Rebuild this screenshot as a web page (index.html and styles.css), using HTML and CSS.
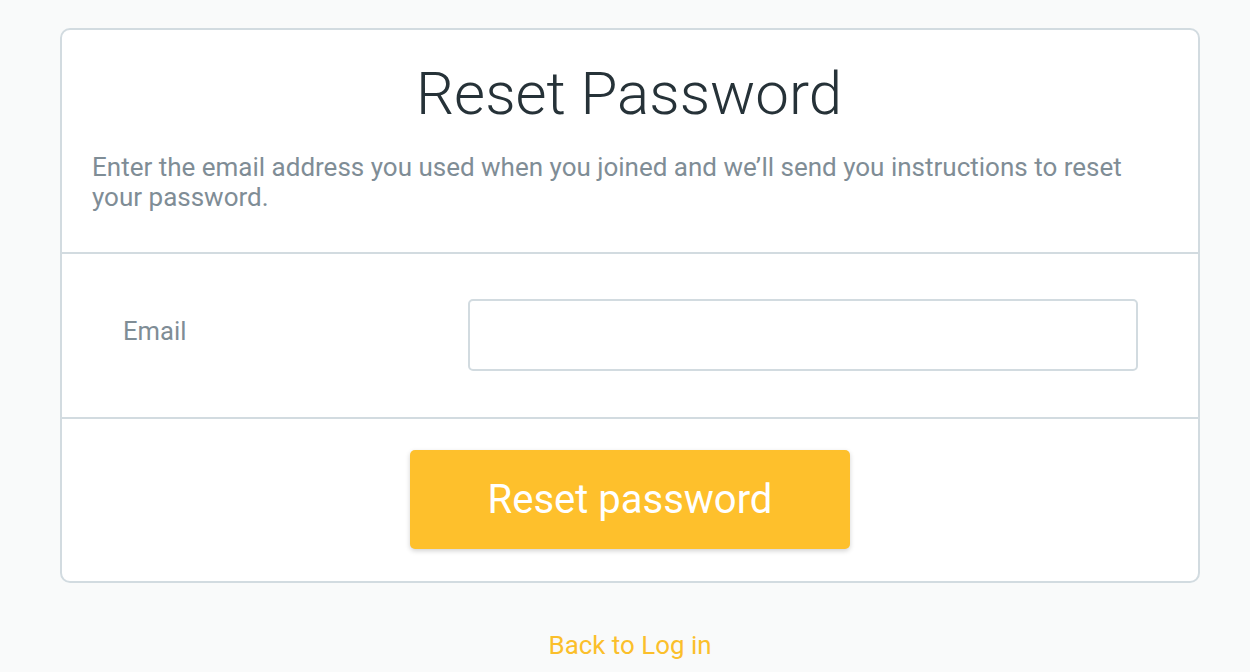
FILE: index.html
```html
<!DOCTYPE html>
<html lang="en">
<head>
<meta charset="utf-8">
<title>Reset Password</title>
<link rel="stylesheet" href="styles.css">
</head>
<body>
<main class="page">
  <section class="card">
    <header class="card-head">
      <h1 class="title">Reset Password</h1>
      <p class="desc">Enter the email address you used when you joined and we’ll send you instructions to reset your password.</p>
    </header>
    <div class="field-row">
      <label class="label" for="email">Email</label>
      <input class="input" id="email" type="email">
    </div>
    <div class="actions">
      <button class="btn" type="button">Reset password</button>
    </div>
  </section>
  <div class="back">
    <a class="back-link" href="#">Back to Log in</a>
  </div>
</main>
</body>
</html>
```
FILE: styles.css
```css
html, body {
  margin: 0;
  padding: 0;
  background: #f9fafa;
  font-family: Roboto, "Liberation Sans", Arial, sans-serif;
}

.page {
  padding-top: 28px;
}

.card {
  width: 1140px;
  margin-left: 60px;
  box-sizing: border-box;
  background: #ffffff;
  border: 2px solid #d2dbe0;
  border-radius: 10px;
}

.card-head {
  padding: 28px 32px 40px 30px;
  border-bottom: 2px solid #d2dbe0;
}

.title {
  margin: 0;
  text-align: center;
  font-size: 60px;
  line-height: 72px;
  font-weight: 300;
  color: #263238;
}

.desc {
  margin: 22px 0 0;
  font-size: 26px;
  line-height: 30px;
  color: #7f8d96;
}

.field-row {
  display: grid;
  grid-template-columns: 345px 1fr;
  align-items: center;
  padding: 45px 60px 46px 61px;
  border-bottom: 2px solid #d2dbe0;
}

.label {
  font-size: 25.6px;
  color: #7f8d96;
  position: relative;
  top: -4px;
}

.input {
  box-sizing: border-box;
  width: 100%;
  height: 72px;
  border: 2px solid #d2dbe0;
  border-radius: 5px;
  background: #ffffff;
  font: inherit;
  margin: 0;
  padding: 0 16px;
}

.actions {
  display: flex;
  justify-content: center;
  padding: 31px 0 32px;
}

.btn {
  width: 440px;
  height: 99px;
  border: none;
  border-radius: 5px;
  background: #fec02c;
  color: #ffffff;
  font-family: Roboto, "Liberation Sans", Arial, sans-serif;
  font-size: 40px;
  font-weight: 400;
  box-shadow: 0 2px 5px rgba(0, 0, 0, 0.18);
  padding: 0;
}

.back {
  text-align: center;
  margin-top: 47px;
  padding-left: 10px;
}

.back-link {
  font-size: 25.9px;
  line-height: 30px;
  color: #fbbf2b;
  text-decoration: none;
}
```
